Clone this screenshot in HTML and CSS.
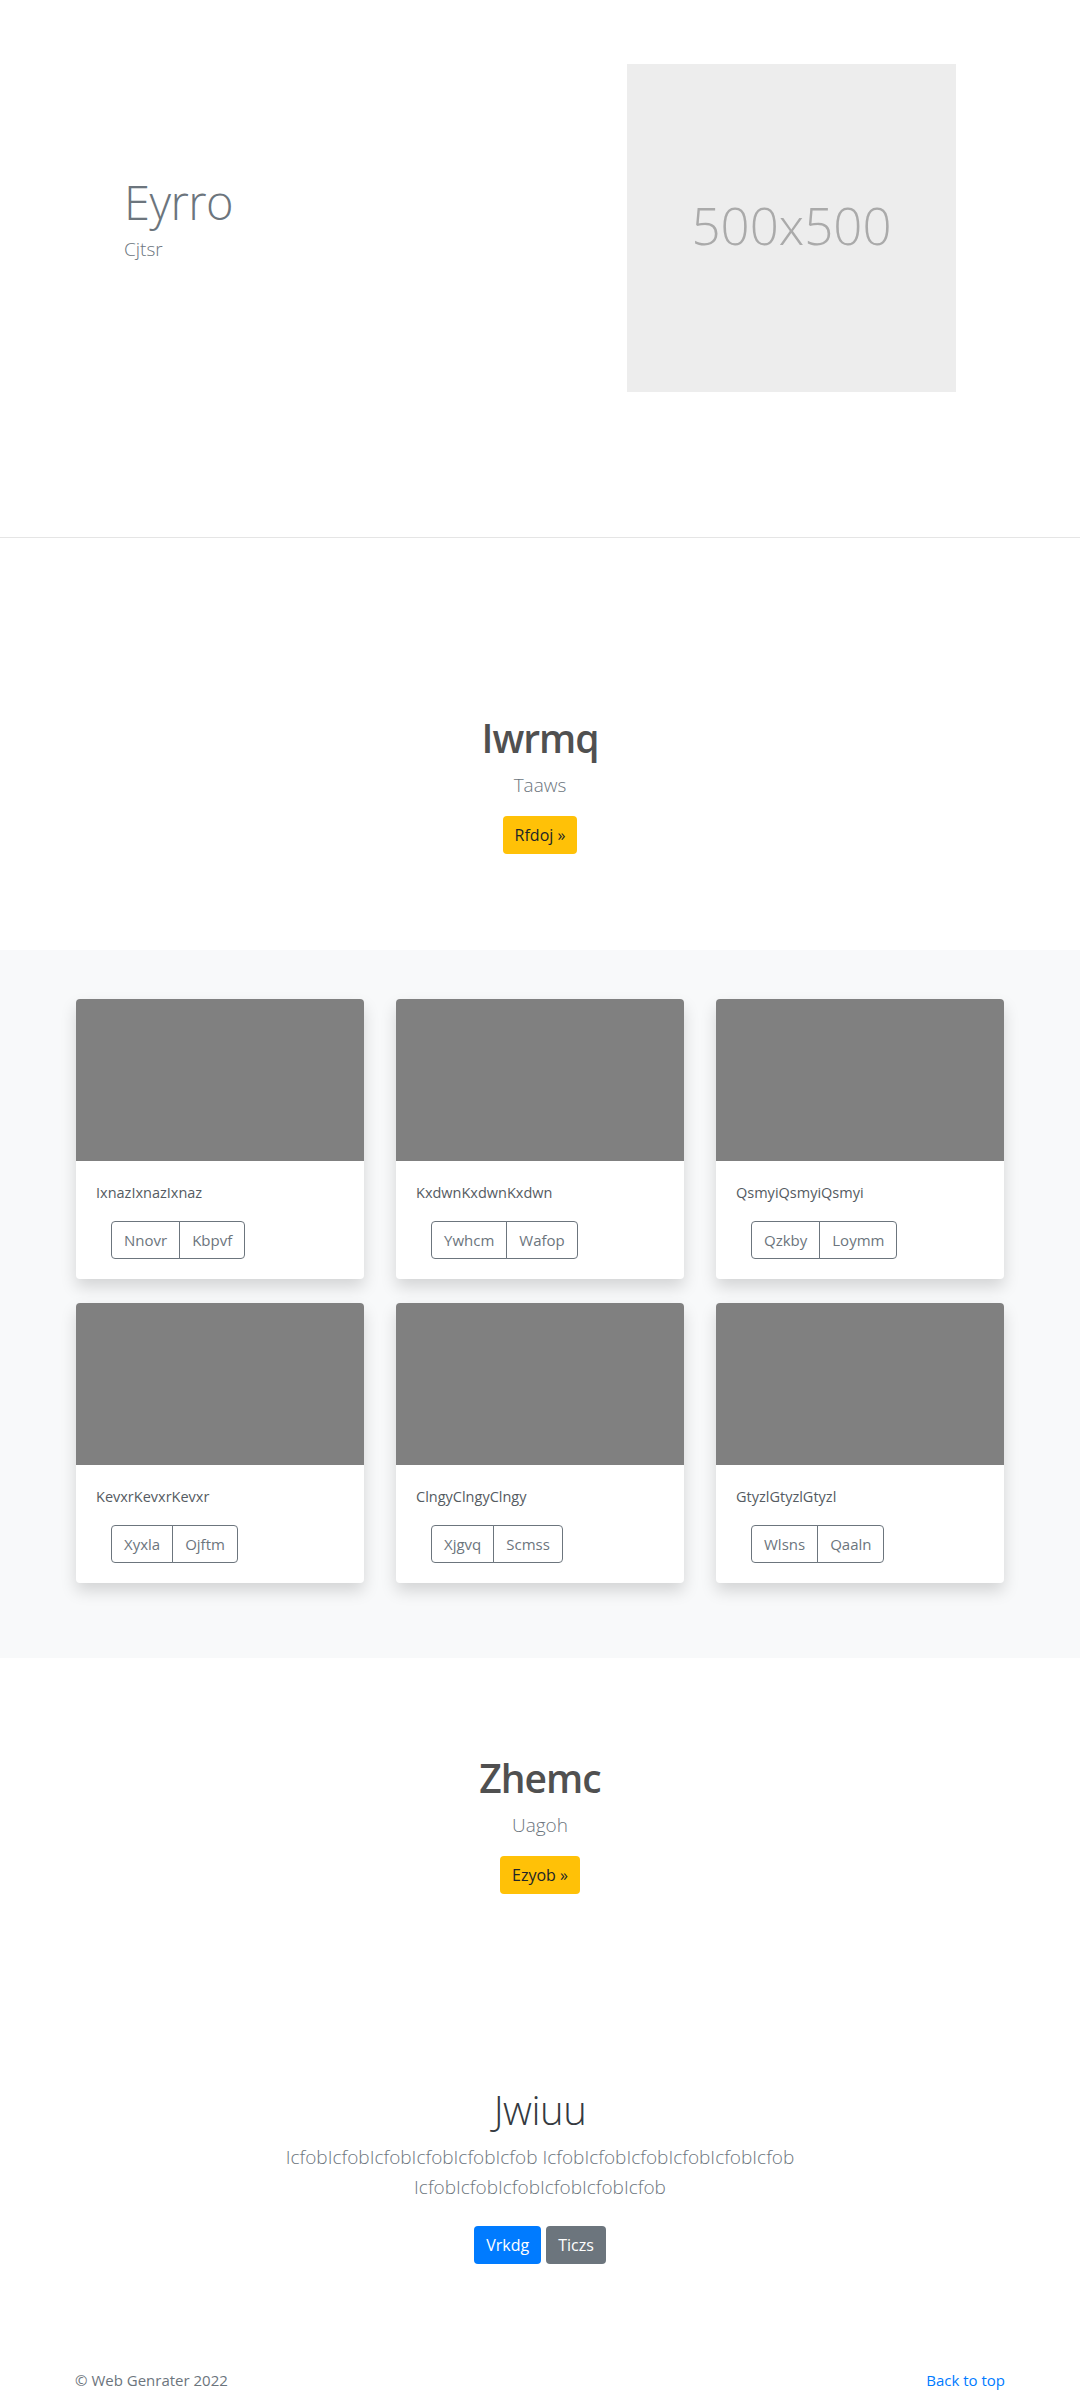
FILE: index.html
```html
<!DOCTYPE html>
<html lang="en">
<head>
<meta charset="utf-8">
<title>Web Genrater</title>
<link rel="stylesheet" href="styles.css">
</head>
<body>
<section class="hero">
  <div class="container hero-row">
    <div class="hero-text">
      <h1 class="hero-title">Eyrro</h1>
      <p class="hero-sub">Cjtsr</p>
    </div>
    <div class="hero-media">
      <div class="placeholder"><span>500x500</span></div>
    </div>
  </div>
</section>

<section class="cta cta-first">
  <div class="container center">
    <h1 class="cta-title">Iwrmq</h1>
    <p class="lead muted">Taaws</p>
    <a class="btn btn-warning" href="#">Rfdoj »</a>
  </div>
</section>

<section class="album">
  <div class="container">
    <div class="card-grid">
      <div class="card">
        <div class="card-img"></div>
        <div class="card-body">
          <p class="card-text">IxnazIxnazIxnaz</p>
          <div class="btn-group"><a class="btn-o" href="#">Nnovr</a><a class="btn-o" href="#">Kbpvf</a></div>
        </div>
      </div>
      <div class="card">
        <div class="card-img"></div>
        <div class="card-body">
          <p class="card-text">KxdwnKxdwnKxdwn</p>
          <div class="btn-group"><a class="btn-o" href="#">Ywhcm</a><a class="btn-o" href="#">Wafop</a></div>
        </div>
      </div>
      <div class="card">
        <div class="card-img"></div>
        <div class="card-body">
          <p class="card-text">QsmyiQsmyiQsmyi</p>
          <div class="btn-group"><a class="btn-o" href="#">Qzkby</a><a class="btn-o" href="#">Loymm</a></div>
        </div>
      </div>
      <div class="card">
        <div class="card-img"></div>
        <div class="card-body">
          <p class="card-text">KevxrKevxrKevxr</p>
          <div class="btn-group"><a class="btn-o" href="#">Xyxla</a><a class="btn-o" href="#">Ojftm</a></div>
        </div>
      </div>
      <div class="card">
        <div class="card-img"></div>
        <div class="card-body">
          <p class="card-text">ClngyClngyClngy</p>
          <div class="btn-group"><a class="btn-o" href="#">Xjgvq</a><a class="btn-o" href="#">Scmss</a></div>
        </div>
      </div>
      <div class="card">
        <div class="card-img"></div>
        <div class="card-body">
          <p class="card-text">GtyzlGtyzlGtyzl</p>
          <div class="btn-group"><a class="btn-o" href="#">Wlsns</a><a class="btn-o" href="#">Qaaln</a></div>
        </div>
      </div>
    </div>
  </div>
</section>

<section class="cta cta-second">
  <div class="container center">
    <h1 class="cta-title">Zhemc</h1>
    <p class="lead muted">Uagoh</p>
    <a class="btn btn-warning" href="#">Ezyob »</a>
  </div>
</section>

<section class="jumbo">
  <div class="container center">
    <div class="jumbo-col">
      <h1 class="jumbo-title">Jwiuu</h1>
      <p class="lead muted">IcfobIcfobIcfobIcfobIcfobIcfob IcfobIcfobIcfobIcfobIcfobIcfob IcfobIcfobIcfobIcfobIcfobIcfob</p>
      <div class="jumbo-actions">
        <a class="btn btn-primary" href="#">Vrkdg</a>
        <a class="btn btn-secondary" href="#">Ticzs</a>
      </div>
    </div>
  </div>
</section>

<footer class="footer">
  <div class="container footer-row">
    <p>© Web Genrater 2022</p>
    <a href="#" class="top-link">Back to top</a>
  </div>
</footer>
</body>
</html>
```

FILE: styles.css
```css
* { box-sizing: border-box; }
html, body { margin: 0; padding: 0; }
body {
  font-family: "Open Sans", "Noto Sans", sans-serif;
  font-size: 16px;
  line-height: 1.5;
  color: #212529;
  background: #fff;
}
h1, p { margin: 0; }
a { text-decoration: none; }

.container {
  width: 960px;
  margin: 0 auto;
  padding: 0 15px;
}
.center { text-align: center; }
.muted { color: #6c757d; }
.lead { font-size: 19px; font-weight: 300; line-height: 30px; }

/* hero */
.hero {
  border-bottom: 1px solid #e5e5e5;
  padding: 64px 0 145px;
}
.hero-row { display: flex; }
.hero-text { flex: 1; padding: 110px 0 0 49px; }
.hero-title {
  font-size: 47px;
  font-weight: 300;
  line-height: 56px;
  color: #6c757d;
  margin-bottom: 4px;
  letter-spacing: -0.5px;
}
.hero-sub { font-size: 19px; font-weight: 300; line-height: 30px; color: #6c757d; }
.hero-media { margin-right: 49px; }
.placeholder {
  width: 329px;
  height: 328px;
  background: #ededed;
  display: flex;
  align-items: center;
  justify-content: center;
  padding-bottom: 6px;
}
.placeholder span {
  font-size: 51px;
  font-weight: 300;
  color: #aaaaaa;
  line-height: 1;
}

/* cta sections */
.cta-first { padding: 176px 0 96px; }
.cta-second { padding: 96px 0 96px; }
.cta-title {
  font-size: 39px;
  font-weight: 600;
  line-height: 48px;
  color: #505050;
  margin-bottom: 8px;
  letter-spacing: -1px;
}
.cta .lead { margin-bottom: 16px; }

.btn {
  display: inline-block;
  font-size: 16px;
  line-height: 24px;
  padding: 7px 12px;
  border-radius: 4px;
  border: 0;
}
.btn-warning { background: #ffc107; color: #212529; }
.btn-primary { background: #007bff; color: #fff; }
.btn-secondary { background: #6c757d; color: #fff; }

/* album */
.album {
  background: #f8f9fa;
  padding: 49px 0 51px;
}
.card-grid {
  display: grid;
  grid-template-columns: repeat(3, 1fr);
  column-gap: 32px;
  row-gap: 24px;
  margin-bottom: 24px;
  padding: 0 1px;
}
.card {
  background: #fff;
  border-radius: 4px;
  overflow: hidden;
  box-shadow: 0 8px 16px rgba(0, 0, 0, 0.15);
}
.card-img { height: 162px; background: #808080; }
.card-body { padding: 20px; }
.card-text {
  font-size: 14.5px;
  line-height: 24px;
  color: #555b62;
  margin-bottom: 16px;
}
.btn-group {
  display: inline-flex;
  margin-left: 15px;
}
.btn-o {
  display: block;
  font-size: 15px;
  line-height: 24px;
  padding: 6px 12px;
  color: #6c757d;
  border: 1px solid #6c757d;
}
.btn-o:first-child { border-radius: 4px 0 0 4px; }
.btn-o:last-child { border-radius: 0 4px 4px 0; margin-left: -1px; }

/* jumbotron */
.jumbo { padding: 96px 0 48px; }
.jumbo-col { width: 640px; margin: 0 auto; padding: 0 15px; }
.jumbo-title {
  font-size: 40px;
  font-weight: 300;
  line-height: 48px;
  color: #343a40;
  margin-bottom: 8px;
  letter-spacing: -0.5px;
}
.jumbo .lead { margin-bottom: 16px; }
.jumbo-actions {
  display: flex;
  justify-content: center;
  gap: 5px;
  padding: 8px 0;
}

/* footer */
.footer { padding: 48px 0; color: #6c757d; }
.footer-row { display: flex; justify-content: space-between; line-height: 24px; font-size: 15px; }
.top-link { color: #007bff; }
```
